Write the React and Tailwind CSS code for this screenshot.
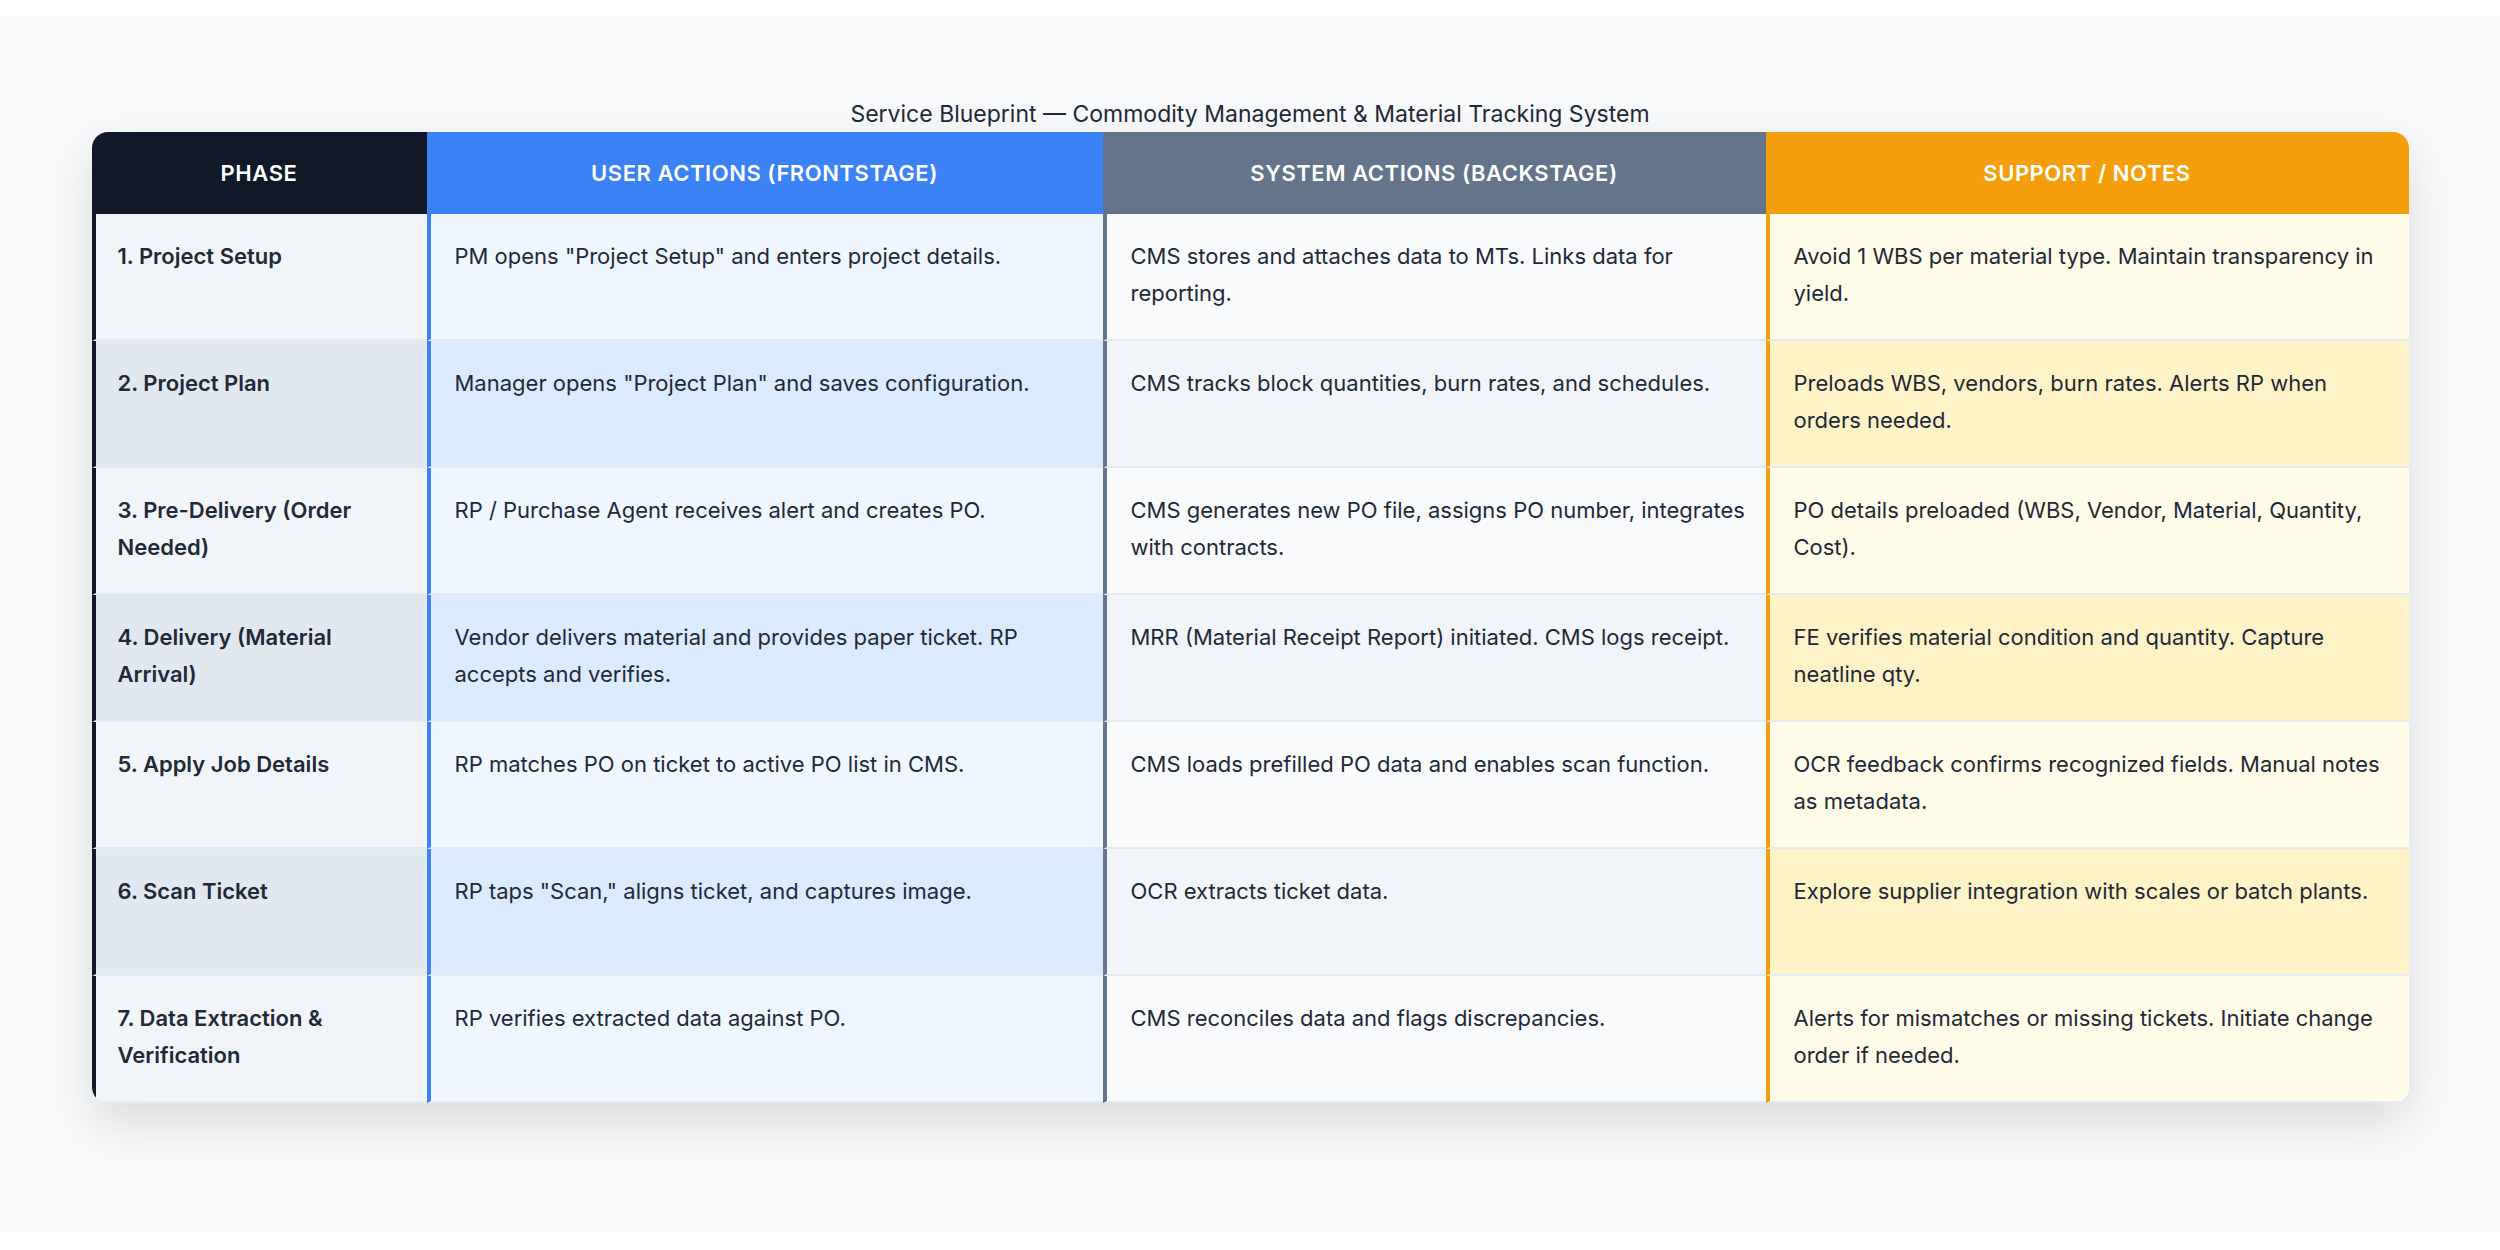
const rows = [
  ["1. Project Setup", 'PM opens "Project Setup" and enters project details.', "CMS stores and attaches data to MTs. Links data for reporting.", "Avoid 1 WBS per material type. Maintain transparency in yield."],
  ["2. Project Plan", 'Manager opens "Project Plan" and saves configuration.', "CMS tracks block quantities, burn rates, and schedules.", "Preloads WBS, vendors, burn rates. Alerts RP when orders needed."],
  ["3. Pre-Delivery (Order Needed)", "RP / Purchase Agent receives alert and creates PO.", "CMS generates new PO file, assigns PO number, integrates with contracts.", "PO details preloaded (WBS, Vendor, Material, Quantity, Cost)."],
  ["4. Delivery (Material Arrival)", "Vendor delivers material and provides paper ticket. RP accepts and verifies.", "MRR (Material Receipt Report) initiated. CMS logs receipt.", "FE verifies material condition and quantity. Capture neatline qty."],
  ["5. Apply Job Details", "RP matches PO on ticket to active PO list in CMS.", "CMS loads prefilled PO data and enables scan function.", "OCR feedback confirms recognized fields. Manual notes as metadata."],
  ["6. Scan Ticket", 'RP taps "Scan," aligns ticket, and captures image.', "OCR extracts ticket data.", "Explore supplier integration with scales or batch plants."],
  ["7. Data Extraction & Verification", "RP verifies extracted data against PO.", "CMS reconciles data and flags discrepancies.", "Alerts for mismatches or missing tickets. Initiate change order if needed."],
];

export default function App() {
  return (
    <div className="bg-white w-[2500px] h-[1250px] pt-[16px]" style={{ fontFamily: "Inter, 'Noto Sans', sans-serif" }}>
      <div className="bg-[#f8f9fb] h-[1216px] pt-[80px] flex flex-col items-center">
        <div className="text-[23px] leading-[36px] text-[#1f2937] h-[36px]">Service Blueprint — Commodity Management &amp; Material Tracking System</div>
        <div className="w-[2317px] rounded-[16px] overflow-hidden bg-white shadow-[0_20px_50px_rgba(0,0,0,0.12)] grid grid-cols-[335px_676px_663px_643px] text-[22px] text-[#1f2937]">
          <div className="h-[82px] bg-[#111827] text-white font-semibold flex items-center justify-center tracking-wide">PHASE</div>
          <div className="h-[82px] bg-[#3b82f6] text-white font-semibold flex items-center justify-center tracking-wide">USER ACTIONS (FRONTSTAGE)</div>
          <div className="h-[82px] bg-[#64748b] text-white font-semibold flex items-center justify-center tracking-wide">SYSTEM ACTIONS (BACKSTAGE)</div>
          <div className="h-[82px] bg-[#f59e0b] text-white font-semibold flex items-center justify-center tracking-wide">SUPPORT / NOTES</div>
          {rows.map((r, i) => {
            const even = i % 2 === 1;
            return [
              <div key={i + "a"} className={`h-[127px] border-l-4 border-l-[#111827] border-b-2 border-b-[#e5e9f0] pl-[22px] pr-[20px] pt-[24px] leading-[37px] font-semibold ${even ? "bg-[#e2e8f0]" : "bg-[#f1f5f9]"}`}>{r[0]}</div>,
              <div key={i + "b"} className={`h-[127px] border-l-4 border-l-[#3b82f6] border-b-2 border-b-[#e5e9f0] pl-[24px] pr-[20px] pt-[24px] leading-[37px] ${even ? "bg-[#dbeafe]" : "bg-[#eff6ff]"}`}>{r[1]}</div>,
              <div key={i + "c"} className={`h-[127px] border-l-4 border-l-[#64748b] border-b-2 border-b-[#e5e9f0] pl-[24px] pr-[20px] pt-[24px] leading-[37px] ${even ? "bg-[#f1f5f9]" : "bg-[#f8fafc]"}`}>{r[2]}</div>,
              <div key={i + "d"} className={`h-[127px] border-l-4 border-l-[#f59e0b] border-b-2 border-b-[#e5e9f0] pl-[24px] pr-[20px] pt-[24px] leading-[37px] ${even ? "bg-[#fef3c7]" : "bg-[#fefbe9]"}`}>{r[3]}</div>,
            ];
          })}
        </div>
      </div>
    </div>
  );
}
